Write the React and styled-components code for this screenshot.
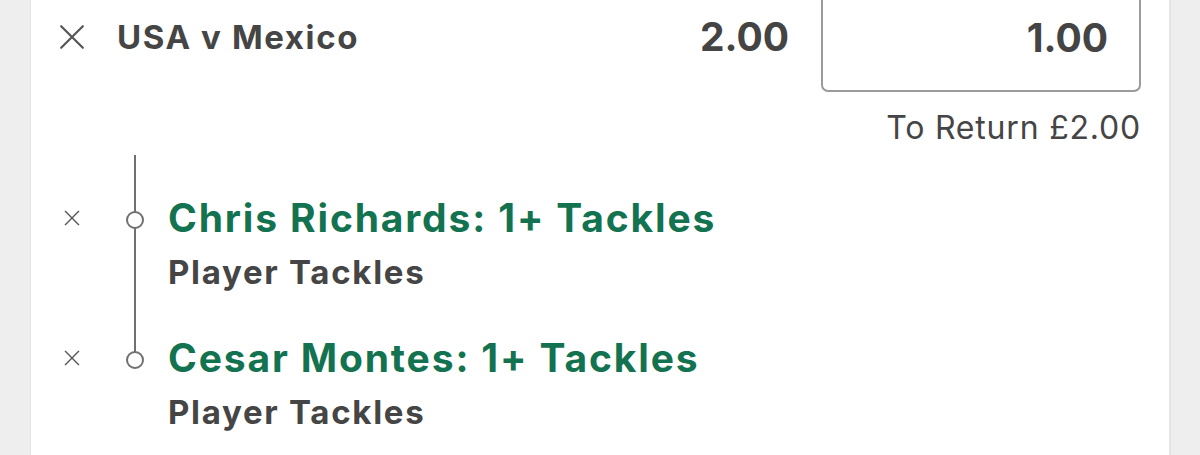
import styled, { createGlobalStyle } from "styled-components";

const Global = createGlobalStyle`
  html, body {
    margin: 0;
    padding: 0;
    background: #eeeeee;
    overflow: hidden;
  }
  body {
    font-family: Inter, "Liberation Sans", Arial, sans-serif;
    color: #444444;
  }
`;

const Card = styled.div`
  display: flow-root;
  margin-left: 30px;
  width: 1141px;
  min-height: 455px;
  box-sizing: border-box;
  background: #ffffff;
  border-left: 1px solid #e2e2e2;
  border-right: 2px solid #e4e4e4;
  padding: 0 28px;
`;

const Header = styled.div`
  display: flex;
  align-items: center;
  margin-top: -18px;
  height: 110px;
`;

const CloseBig = styled.button`
  display: flex;
  padding: 0;
  border: 0;
  background: none;
  width: 26px;
  height: 26px;
  svg {
    display: block;
  }
`;

const Title = styled.div`
  margin-left: 32px;
  font-size: 33px;
  font-weight: 700;
  line-height: 40px;
  letter-spacing: 1.6px;
  color: #454545;
`;

const Odds = styled.div`
  margin-left: auto;
  font-size: 39px;
  font-weight: 700;
  line-height: 48px;
  color: #444444;
`;

const Stake = styled.div`
  margin-left: 32px;
  width: 320px;
  height: 110px;
  box-sizing: border-box;
  border: 2px solid #9b9b9b;
  border-radius: 7px;
  display: flex;
  align-items: center;
  justify-content: flex-end;
  padding-right: 31px;
  font-size: 39px;
  font-weight: 700;
  color: #444444;
`;

const Return = styled.div`
  margin-top: 16px;
  text-align: right;
  font-size: 32px;
  line-height: 40px;
  font-weight: 400;
  letter-spacing: 0.8px;
  color: #454545;
`;

const Legs = styled.div`
  margin-top: 7px;
  margin-left: -3px;
`;

const Leg = styled.div`
  display: flex;
  align-items: flex-start;
  padding: 39px 0 3px;
`;

const Remove = styled.button`
  display: flex;
  align-items: center;
  justify-content: center;
  width: 32px;
  height: 48px;
  padding: 0;
  border: 0;
  background: none;
`;

const Track = styled.div`
  align-self: stretch;
  width: 30px;
  margin-left: 32px;
  position: relative;
  &::before {
    content: "";
    position: absolute;
    left: 14px;
    top: -39px;
    width: 2px;
    background: #707070;
    height: ${(p) => (p.$last ? "64px" : "calc(100% + 42px)")};
  }
`;

const Dot = styled.span`
  position: absolute;
  left: 6px;
  top: 17px;
  width: 18px;
  height: 18px;
  box-sizing: border-box;
  border: 2px solid #707070;
  border-radius: 50%;
  background: #ffffff;
`;

const LegText = styled.div`
  margin-left: 18px;
`;

const LegName = styled.div`
  font-size: 39px;
  font-weight: 700;
  line-height: 48px;
  letter-spacing: 1.85px;
  color: #13724f;
`;

const Market = styled.div`
  margin-top: 10px;
  font-size: 33px;
  font-weight: 700;
  line-height: 40px;
  letter-spacing: 1.7px;
  color: #454545;
`;

const Cross = ({ size, stroke }) => (
  <svg width={size} height={size} viewBox="0 0 24 24">
    <path d="M2 2 L22 22 M22 2 L2 22" stroke="#555" strokeWidth={stroke} strokeLinecap="round" fill="none" />
  </svg>
);

const legs = [
  { name: "Chris Richards: 1+ Tackles", market: "Player Tackles" },
  { name: "Cesar Montes: 1+ Tackles", market: "Player Tackles" },
];

export default function App() {
  return (
    <>
      <Global />
      <Card>
        <Header>
          <CloseBig aria-label="Remove bet">
            <Cross size={26} stroke={2} />
          </CloseBig>
          <Title>USA v Mexico</Title>
          <Odds>2.00</Odds>
          <Stake>1.00</Stake>
        </Header>
        <Return>To Return £2.00</Return>
        <Legs>
          {legs.map((leg, i) => (
            <Leg key={leg.name}>
              <Remove aria-label="Remove selection">
                <Cross size={16} stroke={2} />
              </Remove>
              <Track $last={i === legs.length - 1}>
                <Dot />
              </Track>
              <LegText>
                <LegName>{leg.name}</LegName>
                <Market>{leg.market}</Market>
              </LegText>
            </Leg>
          ))}
        </Legs>
      </Card>
    </>
  );
}
